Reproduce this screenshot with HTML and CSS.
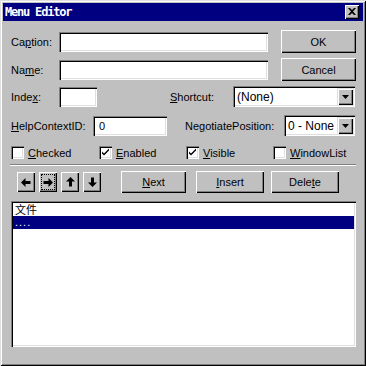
FILE: index.html
```html
<!DOCTYPE html>
<html lang="en">
<head>
    <meta charset="UTF-8">
    <title>Menu Editor</title>
    <link rel="stylesheet" href="styles.css">
</head>
<body>
    <div class="window">
        <div class="titlebar">
            <span class="title">Menu Editor</span>
            <span class="close">
                <svg width="8" height="7" viewBox="0 0 8 7"><path d="M0 0h2l2 2 2-2h2L5 3.5 8 7H6L4 5 2 7H0l3-3.5z" fill="#000"/></svg>
            </span>
        </div>

        <div class="content">
            <div class="row row-first">
                <span class="lbl lbl-left">Ca<u>p</u>tion:</span>
                <div class="field field-wide"></div>
                <button class="btn btn-side">OK</button>
            </div>
            <div class="row row-second">
                <span class="lbl lbl-left">Na<u>m</u>e:</span>
                <div class="field field-wide"></div>
                <button class="btn btn-side">Cancel</button>
            </div>
            <div class="row row-third">
                <span class="lbl lbl-left">Inde<u>x</u>:</span>
                <div class="field field-index"></div>
                <span class="lbl lbl-shortcut"><u>S</u>hortcut:</span>
                <div class="combo combo-shortcut">
                    <span class="combo-text">(None)</span>
                    <span class="combo-btn"><svg width="7" height="4" viewBox="0 0 7 4"><path d="M0 0h7L3.5 4z" fill="#000"/></svg></span>
                </div>
            </div>
            <div class="row row-fourth">
                <span class="lbl lbl-help"><u>H</u>elpContextID:</span>
                <div class="field field-help"><span class="field-text">0</span></div>
                <span class="lbl lbl-negotiate">Ne<u>g</u>otiatePosition:</span>
                <div class="combo combo-negotiate">
                    <span class="combo-text">0 - None</span>
                    <span class="combo-btn"><svg width="7" height="4" viewBox="0 0 7 4"><path d="M0 0h7L3.5 4z" fill="#000"/></svg></span>
                </div>
            </div>
            <div class="checks">
                <div class="check"><span class="box"></span><span class="lbl"><u>C</u>hecked</span></div>
                <div class="check"><span class="box"><svg width="9" height="9" viewBox="0 0 9 9"><path d="M1 3.5l2 2 5-5v2l-5 5-2-2z" fill="#000"/></svg></span><span class="lbl"><u>E</u>nabled</span></div>
                <div class="check"><span class="box"><svg width="9" height="9" viewBox="0 0 9 9"><path d="M1 3.5l2 2 5-5v2l-5 5-2-2z" fill="#000"/></svg></span><span class="lbl"><u>V</u>isible</span></div>
                <div class="check"><span class="box"></span><span class="lbl"><u>W</u>indowList</span></div>
            </div>
            <div class="separator"></div>
            <div class="row row-tools">
                <button class="btn btn-arrow"><svg width="10" height="9" viewBox="0 0 10 9"><path d="M0 4.5L4.5 0v3h5v3h-5v3z" fill="#000"/></svg></button>
                <button class="btn btn-arrow btn-focus"><span class="focus"><svg width="10" height="9" viewBox="0 0 10 9"><path d="M10 4.5L5.5 0v3h-5v3h5v3z" fill="#000"/></svg></span></button>
                <button class="btn btn-arrow"><svg width="9" height="10" viewBox="0 0 9 10"><path d="M4.5 0L9 4.5H6v5H3v-5H0z" fill="#000"/></svg></button>
                <button class="btn btn-arrow"><svg width="9" height="10" viewBox="0 0 9 10"><path d="M4.5 10L9 5.5H6v-5H3v5H0z" fill="#000"/></svg></button>
                <button class="btn btn-next"><u>N</u>ext</button>
                <button class="btn btn-insert"><u>I</u>nsert</button>
                <button class="btn btn-delete">Dele<u>t</u>e</button>
            </div>
            <div class="list">
                <div class="item item-cjk">文件</div>
                <div class="item selected">....</div>
            </div>
        </div>
    </div>
</body>
</html>
```

FILE: styles.css
```css
html, body {
    margin: 0;
    padding: 0;
    background-color: #c0c0c0;
}

.window {
    width: 366px;
    height: 366px;
    box-sizing: border-box;
    background-color: #c0c0c0;
    box-shadow: inset 1px 1px #dfdfdf, inset -1px -1px #000, inset 2px 2px #fff, inset -2px -2px #808080;
    font-family: 'Liberation Sans', Arial, sans-serif;
    font-size: 11px;
    color: #000;
    overflow: hidden;
}

.titlebar {
    margin: 3px 3px 0 3px;
    height: 18px;
    background-color: #000080;
    display: flex;
    align-items: center;
    justify-content: space-between;
}

.title {
    color: #fff;
    font-family: 'DejaVu Sans Mono', monospace;
    font-weight: bold;
    font-size: 12px;
    letter-spacing: -1.2px;
    margin-left: 2px;
}

.close {
    width: 14px;
    height: 14px;
    margin-right: 4px;
    box-sizing: border-box;
    background-color: #c0c0c0;
    box-shadow: inset 1px 1px #fff, inset -1px -1px #000, inset -2px -2px #808080;
    display: flex;
    align-items: center;
    justify-content: center;
}

.close svg {
    margin: 0 1px 1px 0;
}

.content {
    padding: 9px 10px 0 11px;
}

.row {
    display: flex;
    align-items: center;
}

.lbl u {
    text-decoration: underline;
    text-underline-offset: 1px;
}

.lbl {
    white-space: nowrap;
}

.lbl-left {
    width: 48px;
}

.field {
    height: 20px;
    box-sizing: border-box;
    background-color: #fff;
    box-shadow: inset 1px 1px #808080, inset 2px 2px #000, inset -1px -1px #fff, inset -2px -2px #dfdfdf;
    display: flex;
    align-items: center;
}

.field-text {
    padding-left: 6px;
}

.field-wide {
    width: 209px;
}

.btn {
    font-family: 'Liberation Sans', Arial, sans-serif;
    font-size: 11px;
    color: #000;
    background-color: #c0c0c0;
    border: none;
    padding: 0;
    box-sizing: border-box;
    box-shadow: inset 1px 1px #fff, inset -1px -1px #000, inset -2px -2px #808080;
    display: flex;
    align-items: center;
    justify-content: center;
}

.btn-side {
    width: 75px;
    height: 23px;
    margin-left: 13px;
}

.row-first {
    height: 23px;
}

.row-second {
    height: 23px;
    margin-top: 5px;
}

.row-third {
    height: 21px;
    margin-top: 5px;
}

.field-index {
    width: 38px;
}

.lbl-shortcut {
    width: 63px;
    margin-left: 73px;
}

.combo {
    height: 21px;
    box-sizing: border-box;
    background-color: #fff;
    box-shadow: inset 1px 1px #808080, inset 2px 2px #000, inset -1px -1px #fff, inset -2px -2px #dfdfdf;
    display: flex;
    align-items: center;
    justify-content: space-between;
    padding: 2px;
}

.combo-text {
    padding-left: 2px;
    font-size: 12px;
}

.combo-btn {
    width: 16px;
    height: 17px;
    box-sizing: border-box;
    background-color: #c0c0c0;
    box-shadow: inset 1px 1px #dfdfdf, inset 2px 2px #fff, inset -1px -1px #000, inset -2px -2px #808080;
    display: flex;
    align-items: center;
    justify-content: center;
}

.combo-shortcut {
    width: 122px;
}

.row-fourth {
    height: 21px;
    margin-top: 8px;
}

.lbl-help {
    width: 82px;
}

.field-help {
    width: 74px;
}

.lbl-negotiate {
    width: 99px;
    margin-left: 18px;
}

.combo-negotiate {
    width: 71px;
}

.checks {
    display: grid;
    grid-template-columns: 88px 87px 87px 87px;
    margin-top: 10px;
    height: 13px;
}

.check {
    display: flex;
    align-items: center;
    gap: 4px;
}

.box {
    width: 13px;
    height: 13px;
    box-sizing: border-box;
    background-color: #fff;
    box-shadow: inset 1px 1px #808080, inset 2px 2px #000, inset -1px -1px #fff, inset -2px -2px #dfdfdf;
    display: flex;
    align-items: center;
    justify-content: center;
}

.separator {
    margin: 5px 0 0 -1px;
    height: 1px;
    background-color: #808080;
    border-bottom: 1px solid #fff;
}

.row-tools {
    margin-top: 5px;
    height: 22px;
}

.btn-arrow {
    width: 18px;
    height: 20px;
    margin-right: 4px;
}

.btn-arrow:first-child {
    margin-left: 6px;
}

.focus {
    width: 12px;
    height: 14px;
    outline: 1px dotted #000;
    display: flex;
    align-items: center;
    justify-content: center;
}

.btn-next {
    width: 65px;
    height: 22px;
    margin-left: 16px;
}

.btn-insert {
    width: 68px;
    height: 22px;
    margin-left: 10px;
}

.btn-delete {
    width: 68px;
    height: 22px;
    margin-left: 7px;
}

.list {
    margin-top: 8px;
    width: 345px;
    height: 146px;
    box-sizing: border-box;
    background-color: #fff;
    padding: 1px 2px 2px;
    box-shadow: inset 1px 1px #808080, inset 2px 2px #000, inset -1px -1px #fff, inset -2px -2px #dfdfdf;
}

.item {
    height: 13px;
    line-height: 13px;
    padding-left: 2px;
}

.item-cjk {
    font-family: 'Noto Sans CJK SC', 'Liberation Sans', sans-serif;
    font-size: 11px;
    height: 14px;
    line-height: 15px;
}

.item.selected {
    background-color: #000080;
    color: #fff;
    letter-spacing: 1px;
}
```
